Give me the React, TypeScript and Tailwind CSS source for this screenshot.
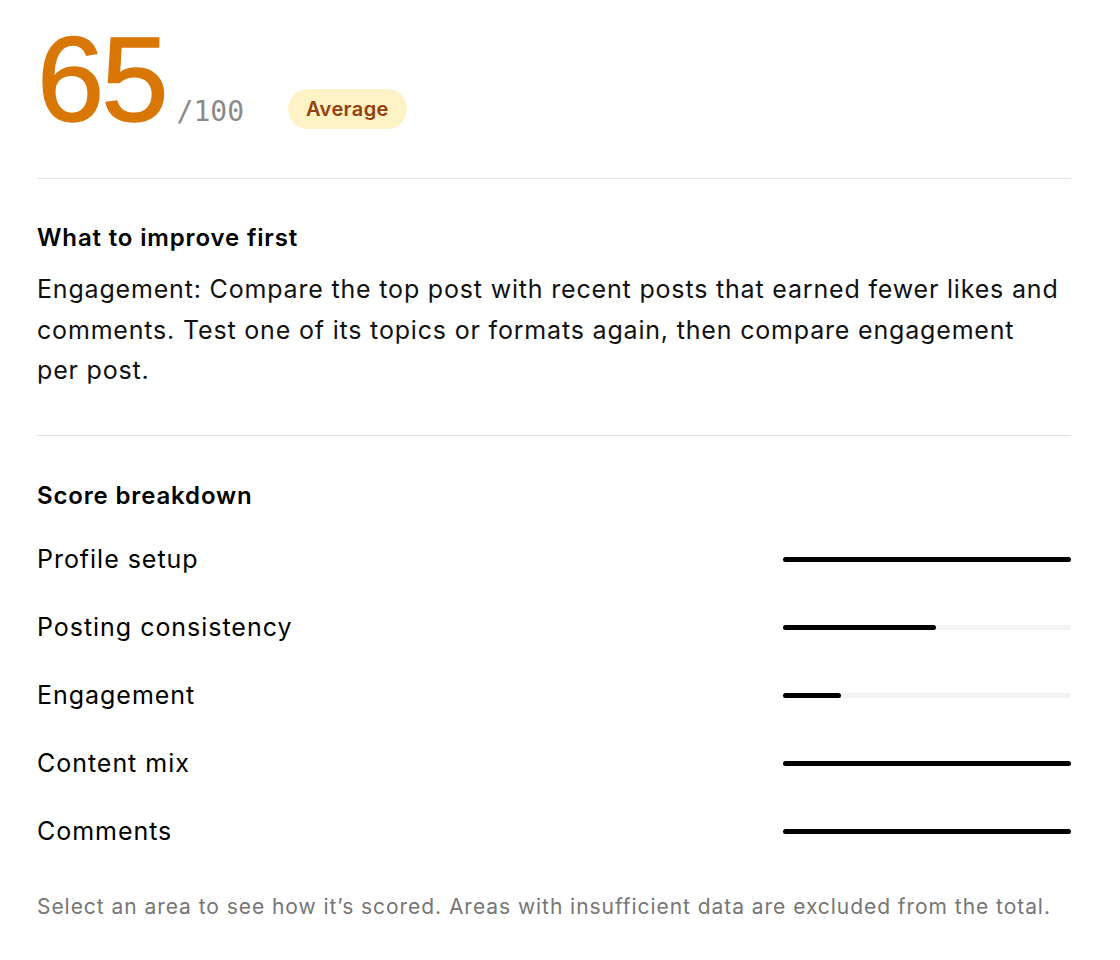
import React from "react";

type Area = { label: string; value: number };

const areas: Area[] = [
  { label: "Profile setup", value: 100 },
  { label: "Posting consistency", value: 53 },
  { label: "Engagement", value: 20 },
  { label: "Content mix", value: 100 },
  { label: "Comments", value: 100 },
];

function Bar({ value }: { value: number }) {
  return (
    <div className="h-[5px] w-[288px] rounded-full bg-[#f3f3f3]">
      <div className="h-full rounded-full bg-black" style={{ width: `${value}%` }} />
    </div>
  );
}

export default function App() {
  return (
    <div className="min-h-[960px] bg-white px-[37px] pt-[19px] text-black [font-family:Inter,'Noto_Sans',sans-serif]">
      <div className="w-[1034px]">
        {/* Overall score */}
        <div className="flex items-end">
          <div className="flex items-baseline">
            <span className="text-[121px] leading-none tracking-[-3px] text-[#d97706] [font-family:'Liberation_Sans',Arial,sans-serif] [-webkit-text-stroke:1.5px_#d97706]">
              65
            </span>
            <span className="ml-[11px] text-[28px] leading-none text-[#8a8a8a] [font-family:'DejaVu_Sans_Mono',monospace]">/100</span>
          </div>
          <span className="mb-[11px] ml-[44px] flex h-[40px] items-center rounded-full bg-[#fef3c7] px-[18px] text-[20px] font-semibold tracking-[0.4px] text-[#92400e]">
            Average
          </span>
        </div>

        <div className="mt-[38px] border-t border-[#e5e5e5]" />

        {/* Top recommendation */}
        <section className="py-[44px]">
          <h2 className="text-[24px] leading-[30px] font-semibold tracking-[0.85px]">What to improve first</h2>
          <p className="mt-[16px] max-w-[1023px] text-[25px] leading-[40.5px] tracking-[0.82px] text-[#111]">
            Engagement: Compare the top post with recent posts that earned fewer likes and comments. Test one of its
            topics or formats again, then compare engagement per post.
          </p>
        </section>

        <div className="border-t border-[#e5e5e5]" />

        {/* Per-area scores */}
        <section className="pt-[45px]">
          <h2 className="text-[24px] leading-[30px] font-semibold tracking-[0.85px]">Score breakdown</h2>
          <ul className="mt-[15px]">
            {areas.map((a) => (
              <li key={a.label} className="flex h-[68px] items-center justify-between">
                <span className="text-[25px] tracking-[0.97px]">{a.label}</span>
                <Bar value={a.value} />
              </li>
            ))}
          </ul>
          <p className="mt-[27px] text-[21px] leading-[28px] tracking-[0.95px] text-[#767676]">
            Select an area to see how it’s scored. Areas with insufficient data are excluded from the total.
          </p>
        </section>
      </div>
    </div>
  );
}
